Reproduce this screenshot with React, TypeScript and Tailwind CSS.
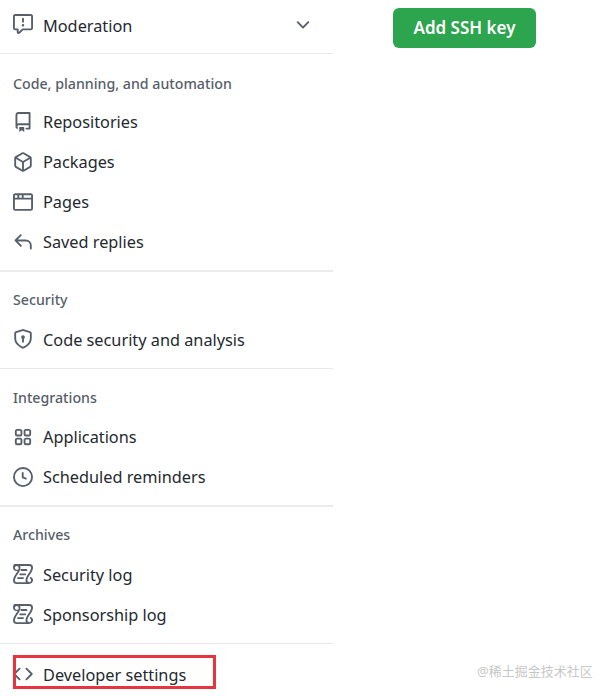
const font = "font-['Noto_Sans','Noto_Sans_CJK_SC',sans-serif]";

const icons: Record<string, string> = {
  report:
    "M0 1.75C0 .784.784 0 1.75 0h12.5C15.216 0 16 .784 16 1.75v9.5A1.75 1.75 0 0 1 14.25 13H8.06l-2.573 2.573A1.458 1.458 0 0 1 3 14.543V13H1.75A1.75 1.75 0 0 1 0 11.25Zm1.75-.25a.25.25 0 0 0-.25.25v9.5c0 .138.112.25.25.25h2a.75.75 0 0 1 .75.75v2.19l2.72-2.72a.749.749 0 0 1 .53-.22h6.5a.25.25 0 0 0 .25-.25v-9.5a.25.25 0 0 0-.25-.25Zm7 2.25v2.5a.75.75 0 0 1-1.5 0v-2.5a.75.75 0 0 1 1.5 0ZM9 9a1 1 0 1 1-2 0 1 1 0 0 1 2 0Z",
  repo:
    "M2 2.5A2.5 2.5 0 0 1 4.5 0h8.75a.75.75 0 0 1 .75.75v12.5a.75.75 0 0 1-.75.75h-2.5a.75.75 0 0 1 0-1.5h1.75v-2h-8a1 1 0 0 0-.714 1.7.75.75 0 1 1-1.072 1.05A2.495 2.495 0 0 1 2 11.5Zm10.5-1h-8a1 1 0 0 0-1 1v6.708A2.486 2.486 0 0 1 4.5 9h8ZM5 12.25a.25.25 0 0 1 .25-.25h3.5a.25.25 0 0 1 .25.25v3.25a.25.25 0 0 1-.4.2l-1.45-1.087a.249.249 0 0 0-.3 0L5.4 15.7a.25.25 0 0 1-.4-.2Z",
  package:
    "m8.878.392 5.25 3.045c.54.314.872.89.872 1.514v6.098a1.75 1.75 0 0 1-.872 1.514l-5.25 3.045a1.75 1.75 0 0 1-1.756 0l-5.25-3.045A1.75 1.75 0 0 1 1 11.049V4.951c0-.624.332-1.201.872-1.514L7.122.392a1.75 1.75 0 0 1 1.756 0ZM7.875 1.69l-4.63 2.685L8 7.133l4.755-2.758-4.63-2.685a.248.248 0 0 0-.25 0ZM2.5 5.677v5.372c0 .09.047.171.125.216l4.625 2.683V8.432Zm6.25 8.271 4.625-2.683a.25.25 0 0 0 .125-.216V5.677L8.75 8.432Z",
  browser:
    "M0 2.75C0 1.784.784 1 1.75 1h12.5c.966 0 1.75.784 1.75 1.75v10.5A1.75 1.75 0 0 1 14.25 15H1.75A1.75 1.75 0 0 1 0 13.25ZM14.5 6h-13v7.25c0 .138.112.25.25.25h12.5a.25.25 0 0 0 .25-.25Zm-6-3.5v2h6V2.75a.25.25 0 0 0-.25-.25ZM5 2.5v2h2v-2Zm-3.25 0a.25.25 0 0 0-.25.25V4.5h2v-2Z",
  reply:
    "M6.78 1.97a.75.75 0 0 1 0 1.06L3.81 6h6.44A4.75 4.75 0 0 1 15 10.75v2.5a.75.75 0 0 1-1.5 0v-2.5a3.25 3.25 0 0 0-3.25-3.25H3.81l2.97 2.97a.749.749 0 0 1-.326 1.275.749.749 0 0 1-.734-.215L1.47 7.28a.75.75 0 0 1 0-1.06l4.25-4.25a.75.75 0 0 1 1.06 0Z",
  shield:
    "m8.533.133 5.25 1.68A1.75 1.75 0 0 1 15 3.48V7c0 1.566-.32 3.182-1.303 4.682-.983 1.498-2.585 2.813-5.032 3.855a1.697 1.697 0 0 1-1.33 0c-2.447-1.042-4.049-2.357-5.032-3.855C1.32 10.182 1 8.566 1 7V3.48a1.75 1.75 0 0 1 1.217-1.667l5.25-1.68a1.748 1.748 0 0 1 1.066 0Zm-.61 1.429.001.001-5.25 1.68a.251.251 0 0 0-.174.237V7c0 1.36.275 2.666 1.057 3.859.784 1.194 2.121 2.342 4.366 3.298a.196.196 0 0 0 .154 0c2.245-.957 3.582-2.103 4.366-3.297C13.225 9.666 13.5 8.358 13.5 7V3.48a.25.25 0 0 0-.174-.238l-5.25-1.68a.25.25 0 0 0-.153 0ZM9.5 6.5c0 .536-.286 1.032-.75 1.3v2.45a.75.75 0 0 1-1.5 0V7.8A1.5 1.5 0 1 1 9.5 6.5Z",
  apps:
    "M1.5 3.25c0-.966.784-1.75 1.75-1.75h2.5c.966 0 1.75.784 1.75 1.75v2.5A1.75 1.75 0 0 1 5.75 7.5h-2.5A1.75 1.75 0 0 1 1.5 5.75Zm7 0c0-.966.784-1.75 1.75-1.75h2.5c.966 0 1.75.784 1.75 1.75v2.5a1.75 1.75 0 0 1-1.75 1.75h-2.5A1.75 1.75 0 0 1 8.5 5.75Zm-7 7c0-.966.784-1.75 1.75-1.75h2.5c.966 0 1.75.784 1.75 1.75v2.5a1.75 1.75 0 0 1-1.75 1.75h-2.5a1.75 1.75 0 0 1-1.75-1.75Zm7 0c0-.966.784-1.75 1.75-1.75h2.5c.966 0 1.75.784 1.75 1.75v2.5a1.75 1.75 0 0 1-1.75 1.75h-2.5a1.75 1.75 0 0 1-1.75-1.75ZM3.25 3a.25.25 0 0 0-.25.25v2.5c0 .138.112.25.25.25h2.5A.25.25 0 0 0 6 5.75v-2.5A.25.25 0 0 0 5.75 3Zm7 0a.25.25 0 0 0-.25.25v2.5c0 .138.112.25.25.25h2.5a.25.25 0 0 0 .25-.25v-2.5a.25.25 0 0 0-.25-.25Zm-7 7a.25.25 0 0 0-.25.25v2.5c0 .138.112.25.25.25h2.5a.25.25 0 0 0 .25-.25v-2.5a.25.25 0 0 0-.25-.25Zm7 0a.25.25 0 0 0-.25.25v2.5c0 .138.112.25.25.25h2.5a.25.25 0 0 0 .25-.25v-2.5a.25.25 0 0 0-.25-.25Z",
  clock:
    "M8 0a8 8 0 1 1 0 16A8 8 0 0 1 8 0ZM1.5 8a6.5 6.5 0 1 0 13 0 6.5 6.5 0 0 0-13 0Zm7-3.25v2.992l2.028.812a.75.75 0 0 1-.557 1.392l-2.5-1A.751.751 0 0 1 7 8.25v-3.5a.75.75 0 0 1 1.5 0Z",
  log:
    "M13 0a3 3 0 0 1 3 3c0 .98-.34 1.93-.78 2.82-.44.88-1.03 1.76-1.58 2.59-.57.85-1.11 1.66-1.51 2.45-.4.79-.63 1.49-.63 2.14a1.5 1.5 0 1 0 2.33-1.25.75.75 0 0 1 .83-1.25A3 3 0 0 1 13 16H3a3 3 0 0 1-3-3c0-1.58.89-3.13 1.78-4.5.21-.33.42-.64.62-.95.47-.71.92-1.39 1.29-2.05H3a3 3 0 0 1 0-6ZM3 1.5A1.5 1.5 0 0 0 1.5 3c0 .8.6 1.5 1.5 1.5h1.2c.2-.5.3-1.1.3-1.5A1.5 1.5 0 0 0 3 1.5Zm2.6 0c.26.45.4.95.4 1.5 0 1.58-.89 3.13-1.78 4.5-.2.33-.42.64-.62.95-.57.85-1.1 1.66-1.5 2.45-.4.79-.6 1.49-.6 2.1A1.5 1.5 0 0 0 3 14.5h7.4A3 3 0 0 1 10 13c0-1 .34-1.93.78-2.82.44-.88 1.03-1.76 1.58-2.59.57-.85 1.1-1.66 1.5-2.45.4-.79.64-1.5.64-2.14A1.5 1.5 0 0 0 13 1.5ZM6.75 4h4a.75.75 0 0 1 0 1.5h-4a.75.75 0 0 1 0-1.5Zm-1 3.5h4a.75.75 0 0 1 0 1.5h-4a.75.75 0 0 1 0-1.5Zm-1.75 3h4a.75.75 0 0 1 0 1.5H4a.75.75 0 0 1 0-1.5Z",
  code:
    "m11.28 3.22 4.25 4.25a.75.75 0 0 1 0 1.06l-4.25 4.25a.749.749 0 0 1-1.275-.326.749.749 0 0 1 .215-.734L13.94 8l-3.72-3.72a.749.749 0 0 1 .326-1.275.749.749 0 0 1 .734.215Zm-6.56 0a.751.751 0 0 1 1.042.018.751.751 0 0 1 .018 1.042L2.06 8l3.72 3.72a.749.749 0 0 1-.326 1.275.749.749 0 0 1-.734-.215L.47 8.53a.75.75 0 0 1 0-1.06Z",
  chevron:
    "M12.78 5.22a.749.749 0 0 1 0 1.06l-4.25 4.25a.749.749 0 0 1-1.06 0L3.22 6.28a.749.749 0 1 1 1.06-1.06L8 8.939l3.72-3.719a.749.749 0 0 1 1.06 0Z",
};

function Icon({ name, className = "" }: { name: string; className?: string }) {
  return (
    <svg viewBox="0 0 16 16" className={`h-5 w-5 shrink-0 fill-[#57606a] ${className}`}>
      <path fillRule="evenodd" d={icons[name]} />
    </svg>
  );
}

function Row({ icon, label, iconClass }: { icon: string; label: string; iconClass?: string }) {
  return (
    <div className="flex h-10 items-center gap-2.5 pl-[13px] text-[16.3px] text-[#24292f]">
      <Icon name={icon} className={iconClass} />
      <span className="pt-px">{label}</span>
    </div>
  );
}

function Heading({ label, className }: { label: string; className: string }) {
  return (
    <div className={`h-12 pl-[13px] text-[14.2px] leading-5 font-medium text-[#57606a] ${className}`}>
      {label}
    </div>
  );
}

export default function App() {
  return (
    <div className={`relative flex h-[697px] overflow-hidden bg-white ${font}`}>
      <aside className="w-[333px] shrink-0 pt-1.5">
        <div className="flex h-10 items-center gap-2.5 pr-[20px] pl-[13px] text-[16.3px] text-[#24292f]">
          <Icon name="report" className="-translate-y-0.5" />
          <span className="flex-1">Moderation</span>
          <Icon name="chevron" className="-translate-y-px" />
        </div>
        <div className="mt-[7px] h-px bg-[#e6e8ea]" />

        <Heading label="Code, planning, and automation" className="pt-5" />
        <Row icon="repo" label="Repositories" />
        <Row icon="package" label="Packages" />
        <Row icon="browser" label="Pages" />
        <Row icon="reply" label="Saved replies" />
        <div className="mt-2 h-0.5 bg-[#eaecee]" />

        <Heading label="Security" className="pt-[18px]" />
        <Row icon="shield" label="Code security and analysis" iconClass="-translate-y-px" />
        <div className="mt-2 h-px bg-[#e6e8ea]" />

        <Heading label="Integrations" className="pt-[19px]" />
        <Row icon="apps" label="Applications" />
        <Row icon="clock" label="Scheduled reminders" />
        <div className="mt-2 h-0.5 bg-[#eaecee]" />

        <Heading label="Archives" className="pt-[18px]" />
        <Row icon="log" label="Security log" iconClass="-translate-y-px" />
        <Row icon="log" label="Sponsorship log" iconClass="-translate-y-px" />
        <div className="mt-2 h-px bg-[#e6e8ea]" />

        <div className="mt-[11px]">
          <Row icon="code" label="Developer settings" iconClass="-translate-y-px" />
        </div>
      </aside>

      <main className="pt-2 pl-[60px]">
        <button className="flex h-10 w-[143px] items-center justify-center rounded-md bg-[#2da44e] text-[17px] font-semibold text-white">
          Add SSH key
        </button>
      </main>

      <div className="absolute top-[655px] left-[13px] h-[34px] w-[203px] border-[3px] border-[#e8343f]" />
      <div className="absolute top-[662px] left-[477px] text-[13px] leading-[18px] text-[#c8c8c8]">@稀土掘金技术社区</div>
    </div>
  );
}
